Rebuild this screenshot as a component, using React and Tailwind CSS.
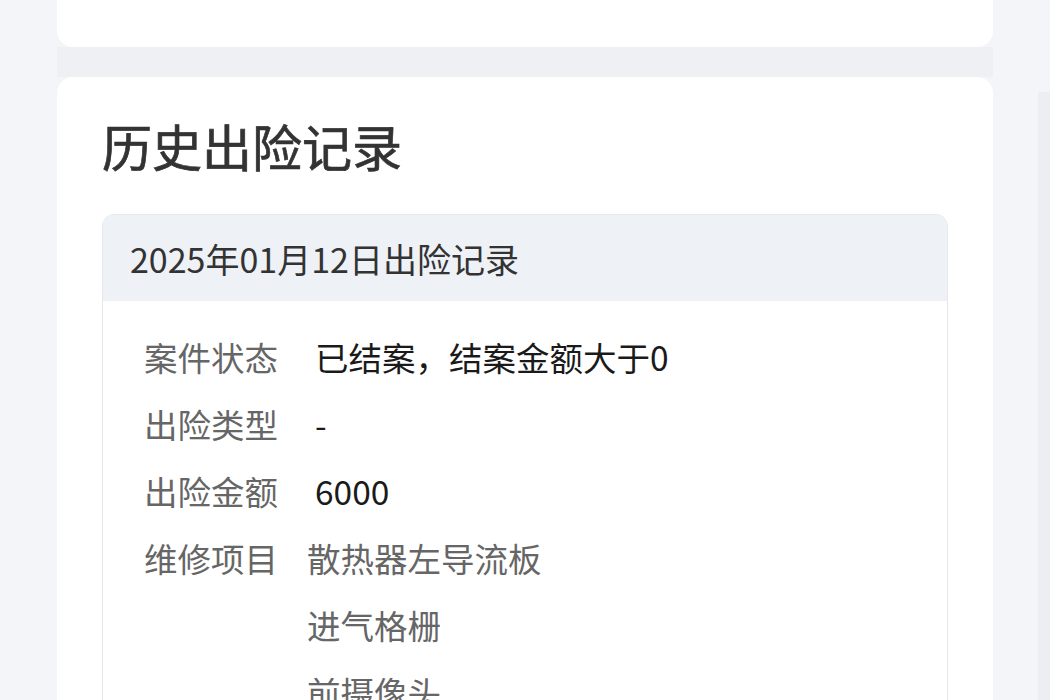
export default function App() {
  const rows = [
    { label: "案件状态", values: ["已结案，结案金额大于0"], dark: true },
    { label: "出险类型", values: ["-"], dark: true },
    { label: "出险金额", values: ["6000"], dark: true },
    { label: "维修项目", values: ["散热器左导流板", "进气格栅", "前摄像头"], dark: false },
  ];
  return (
    <div
      className="w-[1050px] h-[700px] overflow-hidden bg-[#f4f5f8] flex"
      style={{ fontFamily: '"Noto Sans CJK SC", "Noto Sans", sans-serif' }}
    >
      <div className="w-[993px] pl-[57px] flex flex-col shrink-0">
        <div className="h-[47px] bg-white rounded-b-[16px] shrink-0" />
        <div className="h-[30px] bg-[#eff0f3] shrink-0" />
        <div className="flex-1 bg-white rounded-t-[16px] px-[45px] pt-[38px]">
          <div className="text-[50px] leading-[60px] font-normal text-[#333333] [-webkit-text-stroke:0.7px_#333333]">
            历史出险记录
          </div>
          <div className="mt-[39px] border border-[#e6e8ec] rounded-t-[12px] overflow-hidden">
            <div className="h-[86px] bg-[#eef1f6] flex items-center pl-[27px] text-[34px] text-[#333333]">
              2025年01月12日出险记录
            </div>
            <div className="pt-[22px] pl-[41px] flex flex-col">
              {rows.map((r) => (
                <div key={r.label} className="flex">
                  <div className="w-[163px] shrink-0 text-[33.5px] leading-[67px] text-[#666666]">{r.label}</div>
                  <div className="flex flex-col">
                    {r.values.map((v) => (
                      <div
                        key={v}
                        className={
                          "text-[33.5px] leading-[67px] whitespace-nowrap " +
                          (r.dark ? "text-[#1a1a1a] pl-[8px]" : "text-[#666666]")
                        }
                      >
                        {v}
                      </div>
                    ))}
                  </div>
                </div>
              ))}
            </div>
          </div>
        </div>
      </div>
      <div className="flex-1 flex flex-col">
        <div className="h-[92px] shrink-0" />
        <div className="flex-1 ml-[45px] bg-[#eceef2]" />
      </div>
    </div>
  );
}
